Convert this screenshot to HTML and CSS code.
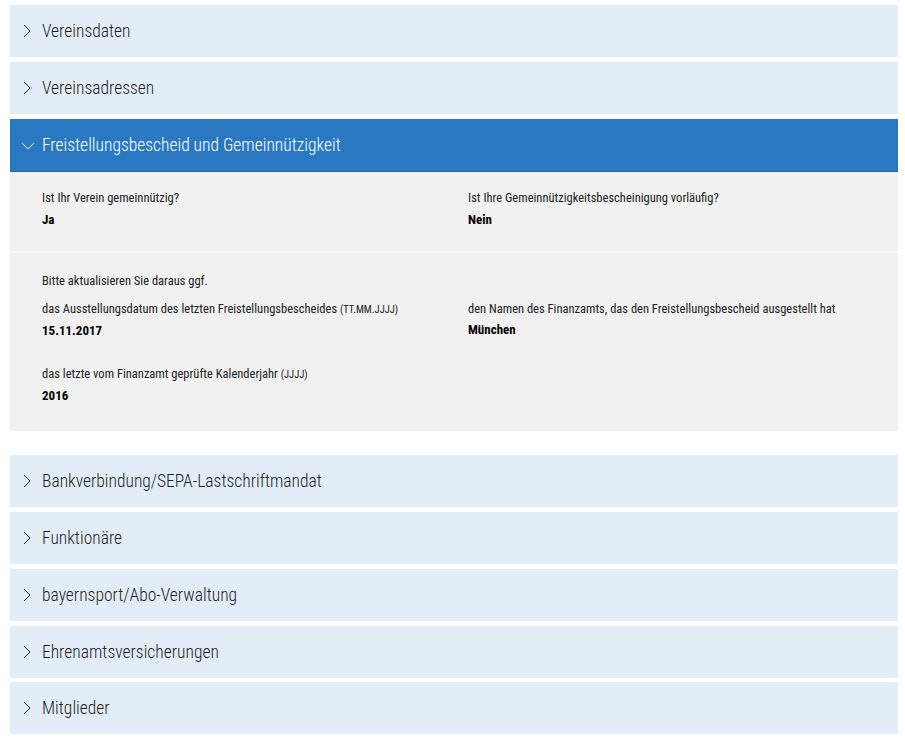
FILE: index.html
```html
<!DOCTYPE html>
<html lang="de">
<head>
<meta charset="utf-8">
<title>Verein</title>
<link rel="stylesheet" href="styles.css">
</head>
<body>
<div class="accordion">
  <div class="item">
    <div class="head"><svg class="chev" viewBox="0 0 8 14"><path d="M1 1 L7 7 L1 13"/></svg><span>Vereinsdaten</span></div>
  </div>
  <div class="item">
    <div class="head"><svg class="chev" viewBox="0 0 8 14"><path d="M1 1 L7 7 L1 13"/></svg><span>Vereinsadressen</span></div>
  </div>
  <div class="item open">
    <div class="head active"><svg class="chev down" viewBox="0 0 14 8"><path d="M1 1 L7 7 L13 1"/></svg><span>Freistellungsbescheid und Gemeinnützigkeit</span></div>
    <div class="body">
      <div class="section first">
        <div class="field">
          <div class="label">Ist Ihr Verein gemeinnützig?</div>
          <div class="value">Ja</div>
        </div>
        <div class="field">
          <div class="label">Ist Ihre Gemeinnützigkeitsbescheinigung vorläufig?</div>
          <div class="value">Nein</div>
        </div>
      </div>
      <div class="section second">
        <div class="intro">Bitte aktualisieren Sie daraus ggf.</div>
        <div class="grid">
          <div class="field">
            <div class="label">das Ausstellungsdatum des letzten Freistellungsbescheides <small>(TT.MM.JJJJ)</small></div>
            <div class="value">15.11.2017</div>
          </div>
          <div class="field">
            <div class="label">den Namen des Finanzamts, das den Freistellungsbescheid ausgestellt hat</div>
            <div class="value">München</div>
          </div>
          <div class="field">
            <div class="label">das letzte vom Finanzamt geprüfte Kalenderjahr <small>(JJJJ)</small></div>
            <div class="value">2016</div>
          </div>
        </div>
      </div>
    </div>
  </div>
  <div class="item">
    <div class="head"><svg class="chev" viewBox="0 0 8 14"><path d="M1 1 L7 7 L1 13"/></svg><span>Bankverbindung/SEPA-Lastschriftmandat</span></div>
  </div>
  <div class="item">
    <div class="head"><svg class="chev" viewBox="0 0 8 14"><path d="M1 1 L7 7 L1 13"/></svg><span>Funktionäre</span></div>
  </div>
  <div class="item">
    <div class="head"><svg class="chev" viewBox="0 0 8 14"><path d="M1 1 L7 7 L1 13"/></svg><span>bayernsport/Abo-Verwaltung</span></div>
  </div>
  <div class="item">
    <div class="head"><svg class="chev" viewBox="0 0 8 14"><path d="M1 1 L7 7 L1 13"/></svg><span>Ehrenamtsversicherungen</span></div>
  </div>
  <div class="item">
    <div class="head"><svg class="chev" viewBox="0 0 8 14"><path d="M1 1 L7 7 L1 13"/></svg><span>Mitglieder</span></div>
  </div>
</div>
</body>
</html>
```
FILE: styles.css
```css
html, body {
  margin: 0;
  padding: 0;
  background: #ffffff;
}
body {
  font-family: "Roboto Condensed", "Liberation Sans Narrow", "DejaVu Sans Condensed", Roboto, sans-serif;
  color: #222222;
}
.accordion {
  width: 888px;
  margin: 5px 0 0 10px;
  display: flex;
  flex-direction: column;
  gap: 4.75px;
}
.item.open {
  margin-bottom: 20px;
}
.head {
  height: 52px;
  background: #e3edf8;
  display: flex;
  align-items: center;
  padding-left: 13px;
  font-size: 17.5px;
  font-weight: 300;
  color: #1e1e1e;
}
.head span {
  margin-left: 11px;
}
.chev {
  width: 8px;
  height: 14px;
  fill: none;
  stroke: #222222;
  stroke-width: 1;
}
.head.active {
  background: #2a78c2;
  color: #ffffff;
  height: 52px;
  border-bottom: 1px solid #2567a8;
}
.chev.down {
  width: 14px;
  height: 8px;
  stroke: #ffffff;
  margin-left: -2px;
  margin-top: 2px;
}
.head.active span {
  margin-left: 7px;
}
.body {
  background: #f1f1f1;
}
.section {
  padding: 0 32px;
}
.section.first {
  display: grid;
  grid-template-columns: 426px 1fr;
  padding-top: 18px;
  height: 81px;
  box-sizing: border-box;
  border-bottom: 2px solid #f8f8f8;
}
.section.second {
  padding-top: 20px;
  padding-bottom: 27px;
}
.intro {
  font-size: 12.5px;
  line-height: 16px;
  margin-bottom: 12px;
}
.grid {
  display: grid;
  grid-template-columns: 426px 1fr;
  row-gap: 27px;
}
.label {
  font-size: 12.5px;
  line-height: 16px;
  color: #222222;
}
.label small {
  font-size: 10.5px;
}
.value {
  font-size: 13px;
  line-height: 16px;
  font-weight: bold;
  color: #000000;
  margin-top: 6px;
}
.grid .value {
  margin-top: 5px;
}
```
